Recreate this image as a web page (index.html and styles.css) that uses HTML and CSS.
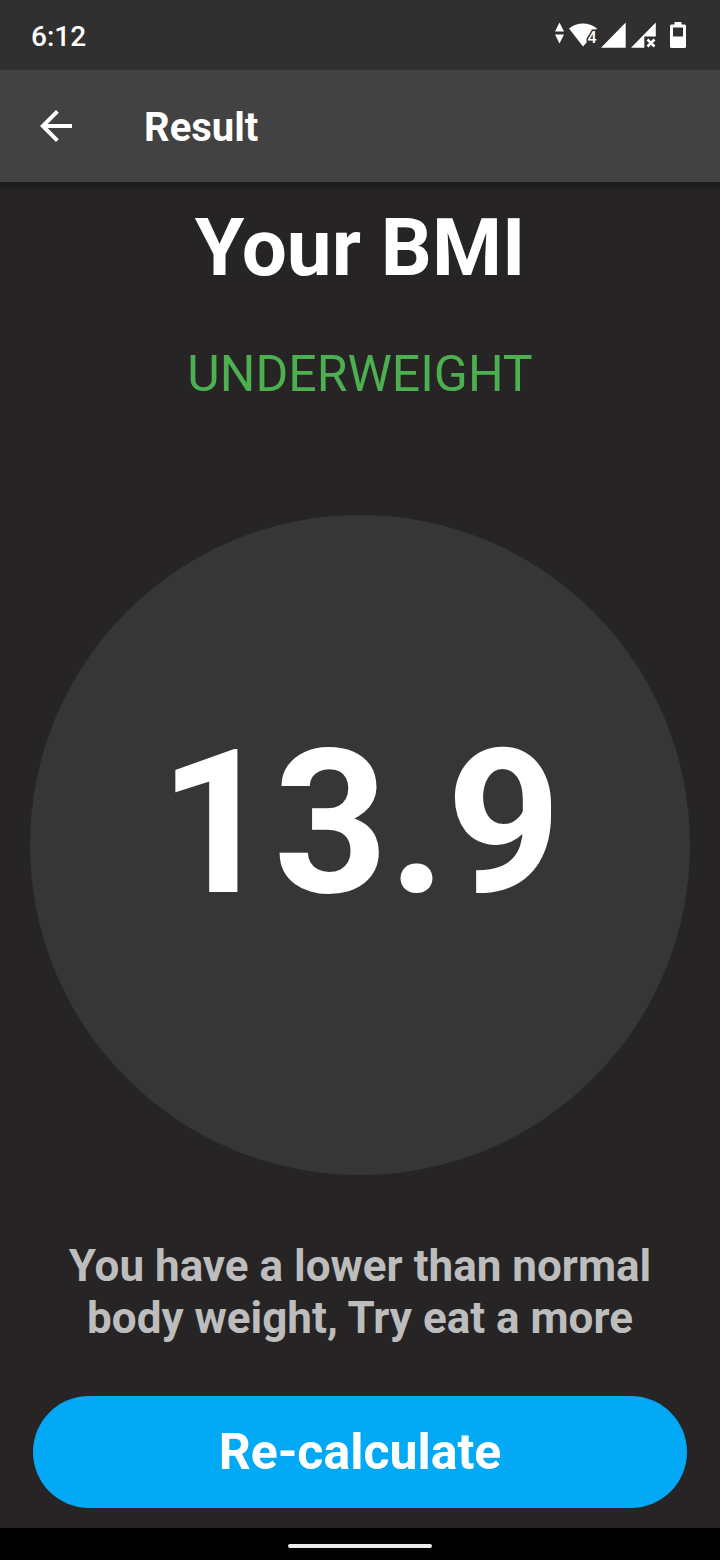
FILE: index.html
```html
<!DOCTYPE html>
<html lang="en">
<head>
<meta charset="utf-8">
<meta name="viewport" content="width=device-width, initial-scale=1">
<title>Result</title>
<link rel="stylesheet" href="styles.css">
</head>
<body class="screen">
  <div class="status-bar">
    <time class="clock">6:12</time>
    <div class="status-icons">
      <svg width="10" height="30" viewBox="0 0 10 30" aria-hidden="true"><path d="M4.500 2.500L9 11.500H0zM0 14.500H9L4.500 23.500z"/></svg>
      <svg width="30" height="30" viewBox="0 0 30 30" aria-hidden="true"><path d="M1 8.500Q7.500 3.500 15 3.500T29 8.500L27.500 10.500H24.500L19 18V22L15 26.500z"/><text class="wifi-band" x="19.500" y="23">4</text></svg>
      <svg width="26" height="30" viewBox="0 0 26 30" aria-hidden="true"><path d="M0 27.700L24.700 2.500V27.700z"/></svg>
      <svg width="27" height="30" viewBox="0 0 27 30" aria-hidden="true"><path d="M1 27.700L25.800 2.500V16.500H14.300V27.700z"/><path class="cross" d="M17.500 19.500l7 7M24.500 19.500l-7 7"/></svg>
      <svg class="battery" width="16" height="30" viewBox="0 0 16 30" aria-hidden="true"><path fill-rule="evenodd" d="M4.500 2H11.500V4.500H14.500Q16 4.500 16 6V26.500Q16 28 14.500 28H1.500Q0 28 0 26.500V6Q0 4.500 1.500 4.500H4.500zM3 7.500V16.500H13V7.500z"/></svg>
    </div>
  </div>

  <header class="app-bar">
    <button class="back" type="button" aria-label="Back">
      <svg width="48" height="48" viewBox="0 0 24 24" aria-hidden="true"><path d="M20 11H7.830l5.590-5.590L12 4l-8 8 8 8 1.410-1.410L7.830 13H20v-2z"/></svg>
    </button>
    <h1 class="title">Result</h1>
  </header>

  <main class="result">
    <h2 class="heading">Your BMI</h2>
    <p class="category">UNDERWEIGHT</p>
    <div class="dial"><span class="score">13.9</span></div>
    <p class="advice">You have a lower than normal body weight, Try eat a more</p>
    <button class="recalculate" type="button">Re-calculate</button>
  </main>

  <footer class="nav-bar"><span class="nav-handle"></span></footer>
</body>
</html>
```
FILE: styles.css
```css
* {
  box-sizing: border-box;
}

.screen {
  margin: 0;
  min-height: 100vh;
  display: flex;
  flex-direction: column;
  background: #262425;
  color: #fff;
  font-family: Roboto, "Liberation Sans", sans-serif;
}

.status-bar {
  display: flex;
  align-items: center;
  justify-content: space-between;
  height: 70px;
  padding: 0 34px 0 31px;
  background: #303030;
}

.clock {
  font-size: 28px;
  line-height: 32px;
  font-weight: 500;
  padding-top: 4px;
}

.status-icons {
  display: flex;
  gap: 3px;
  fill: #fff;
}

.wifi-band {
  font-size: 16px;
  font-weight: 500;
  stroke: #303030;
  stroke-width: 3px;
  paint-order: stroke;
}

.cross {
  fill: none;
  stroke: #fff;
  stroke-width: 2.5;
}

.battery {
  margin-left: 10px;
}

.app-bar {
  display: flex;
  align-items: center;
  gap: 64px;
  height: 112px;
  padding: 0 32px;
  background: #424242;
  box-shadow: 0 5px 5px rgba(0, 0, 0, 0.25);
}

.back {
  display: flex;
  padding: 0;
  border: 0;
  background: none;
  fill: #fff;
  cursor: pointer;
}

.title {
  margin: 0;
  padding-top: 4px;
  font-size: 40px;
  line-height: 48px;
  font-weight: 700;
}

.result {
  flex: 1;
  display: flex;
  flex-direction: column;
  align-items: center;
  padding: 19px 30px 20px;
  text-align: center;
}

.heading {
  margin: 0;
  font-size: 80px;
  line-height: 94px;
  font-weight: 700;
}

.category {
  margin: 50px 0 0;
  color: #4caf50;
  font-size: 50px;
  line-height: 58px;
}

.dial {
  display: flex;
  align-items: center;
  justify-content: center;
  width: 100%;
  aspect-ratio: 1;
  margin-top: 112px;
  padding-bottom: 42px;
  border-radius: 50%;
  background: #363636;
}

.score {
  font-size: 200px;
  line-height: 234px;
  font-weight: 700;
}

.advice {
  margin: 65px 0 0;
  color: #bdbdbd;
  font-size: 44px;
  line-height: 52px;
  font-weight: 700;
}

.recalculate {
  width: calc(100% - 6px);
  height: 112px;
  margin-top: auto;
  border: 0;
  border-radius: 56px;
  background: #03a9f4;
  color: #fff;
  font-family: inherit;
  font-size: 50px;
  font-weight: 700;
  cursor: pointer;
}

.nav-bar {
  display: flex;
  align-items: center;
  justify-content: center;
  height: 32px;
  padding-top: 4px;
  background: #000;
}

.nav-handle {
  width: 144px;
  height: 4px;
  border-radius: 2px;
  background: #ebebeb;
}
```
